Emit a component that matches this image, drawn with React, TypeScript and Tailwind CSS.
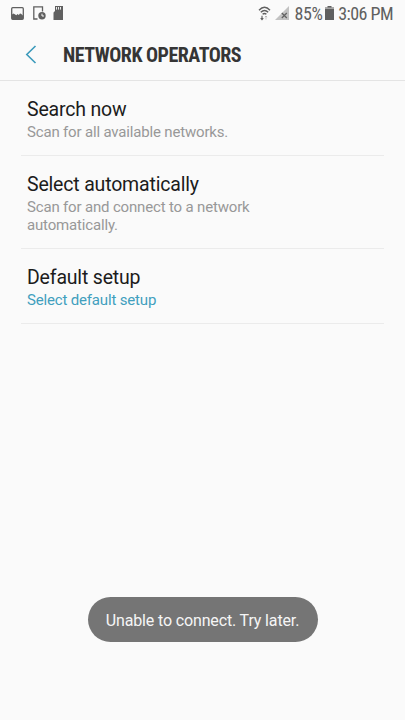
import clsx from 'clsx';

interface Operator {
  title: string
  summary: string
  active?: boolean
}

const operators: Operator[] = [
  { title: 'Search now', summary: 'Scan for all available networks.' },
  { title: 'Select automatically', summary: 'Scan for and connect to a network automatically.' },
  { title: 'Default setup', summary: 'Select default setup', active: true },
];

const StatusBar = () => (
  <div className="flex h-7 items-center justify-between pl-[11px] pr-[12px] text-[#606060]">
    <div className="flex items-center pb-0.5">
      <svg width="13" height="13" viewBox="0 0 13 13">
        <rect x="0.7" y="0.7" width="11.6" height="11.6" rx="1" fill="none" stroke="currentColor" strokeWidth="1.3" />
        <path d="M1 12V7.5l1.5-1 1.3.8 1.5 1 1.2-1.2 1.3.9 1.2-1.5 1 .3 2 1.8V12z" fill="currentColor" />
      </svg>
      <svg className="ml-[9px]" width="13" height="14" viewBox="0 0 13 14">
        <path d="M4.5 13H.8V.8h8.7V5.5" fill="none" stroke="currentColor" strokeWidth="1.3" />
        <circle cx="9" cy="9.8" r="3.7" fill="currentColor" />
        <path d="M9 7.7v2.3h2" fill="none" stroke="#fafafa" strokeWidth="1" />
      </svg>
      <svg className="ml-[7px]" width="11" height="14" viewBox="0 0 11 14">
        <path d="M2 0h8v14H.5V6.5L2 5z" fill="currentColor" />
        <path d="M3.5 1v2.6M5.5 1v2.6M7.5 1v2.6" stroke="#fafafa" strokeWidth="0.9" />
      </svg>
    </div>
    <div className="flex items-center">
      <svg className="mb-0.5" width="13" height="15" viewBox="0 0 13 15" fill="none" stroke="currentColor">
        <path d="M1 4.2Q6.5-1.6 12 4.2M2.8 6.3q3.7-3.6 7.4 0M4.6 8.3q1.9-1.7 3.8 0" strokeWidth="1.4" />
        <path d="M4 9.8v3.7M2.7 12.2 4 13.6l1.3-1.4" strokeWidth="1.1" />
        <path d="M8 13.5V10M6.9 11.2 8 10l1.1 1.2" strokeWidth="0.8" opacity=".4" />
      </svg>
      <svg className="mb-0.5 ml-1" width="14" height="14" viewBox="0 0 14 14">
        <path d="M14 0v14H0z" fill="#c2c2c2" />
        <path d="m6.8 7 5 5m0-5-5 5" stroke="currentColor" strokeWidth="1.2" />
      </svg>
      <span className="ml-1.5 font-['Roboto_Condensed',Roboto,sans-serif] text-[18px] leading-7 tracking-[-0.5px] font-stretch-condensed">85%</span>
      <svg className="mb-0.5 ml-[3px]" width="9" height="14" viewBox="0 0 9 14">
        <path d="M2.5 0h4v1.5H9V14H0V1.5h2.5z" fill="currentColor" />
        <path d="M0 1.5h9V3H0z" fill="#a5a5a5" />
      </svg>
      <span className="ml-1 font-['Roboto_Condensed',Roboto,sans-serif] text-[18px] leading-7 tracking-[-0.55px] font-stretch-condensed">3:06 PM</span>
    </div>
  </div>
);

const Header = () => (
  <header className="flex h-[53px] items-center border-b border-[#e4e4e4] pl-[25px]">
    <svg width="12" height="19" viewBox="0 0 12 19" fill="none" stroke="#3b9abb" strokeWidth="1.6">
      <path d="M10.5 1 1.8 9.5l8.7 8.5" />
    </svg>
    <h1 className="mt-0.5 ml-[26px] font-['Roboto_Condensed',Roboto,sans-serif] text-[20px] font-bold tracking-[-0.5px] text-[#353535] font-stretch-[75%]">
      NETWORK OPERATORS
    </h1>
  </header>
);

const OperatorRow = ({ title, summary, active }: Operator) => (
  <li className="border-b border-[#ebebeb] pt-4 pb-[13.5px] pl-1.5">
    <p className="text-[19.5px] leading-[25px] tracking-[-0.18px] text-[#1c1c1c]">{title}</p>
    <p className={clsx('w-[250px] pt-[2px] text-[15px] leading-[17.5px] tracking-[-0.17px]', active ? 'text-[#419fbe]' : 'text-[#989898]')}>{summary}</p>
  </li>
);

const App = () => {
  return (
    <div className="flex h-screen flex-col bg-[#fafafa] font-[Roboto,sans-serif]">
      <StatusBar />
      <Header />
      <ul className="flex-1 px-[21px]">
        {operators.map((operator) => (
          <OperatorRow key={operator.title} {...operator} />
        ))}
      </ul>
      <div className="mb-[78px] flex h-[45px] w-[230px] items-center justify-center self-center rounded-full bg-[#757575] pt-0.5 text-[16px] tracking-[-0.14px] text-[#f5f5f5]">
        Unable to connect. Try later.
      </div>
    </div>
  )
}

export default App
